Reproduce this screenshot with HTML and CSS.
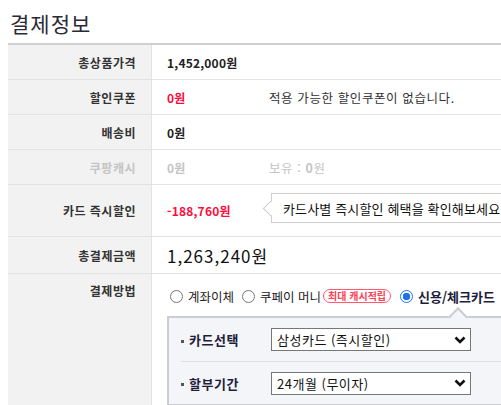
FILE: index.html
```html
<!DOCTYPE html>
<html lang="ko">
<head>
<meta charset="utf-8">
<link rel="stylesheet" href="styles.css">
</head>
<body>
<h2 class="title">결제정보</h2>
<div class="table">
  <div class="row">
    <div class="label">총상품가격</div>
    <div class="value"><span class="amt">1,452,000원</span></div>
  </div>
  <div class="row">
    <div class="label">할인쿠폰</div>
    <div class="value"><span class="amt red">0원</span><span class="note">적용 가능한 할인쿠폰이 없습니다.</span></div>
  </div>
  <div class="row">
    <div class="label">배송비</div>
    <div class="value"><span class="amt">0원</span></div>
  </div>
  <div class="row dim">
    <div class="label">쿠팡캐시</div>
    <div class="value"><span class="amt">0원</span><span class="note">보유 : <b>0</b>원</span></div>
  </div>
  <div class="row tall">
    <div class="label">카드 즉시할인</div>
    <div class="value"><span class="amt red">-188,760원</span><span class="tip">카드사별 즉시할인 혜택을 확인해보세요</span></div>
  </div>
  <div class="row sum">
    <div class="label">총결제금액</div>
    <div class="value"><span class="total">1,263,240원</span></div>
  </div>
  <div class="row method">
    <div class="label">결제방법</div>
    <div class="value col">
      <div class="radios">
        <span class="radio"><span class="circle"></span>계좌이체</span>
        <span class="radio"><span class="circle"></span>쿠페이 머니</span>
        <span class="badge">최대 캐시적립</span>
        <span class="radio on"><span class="circle"></span>신용/체크카드</span>
      </div>
      <div class="panel">
        <div class="prow">
          <span class="plabel">카드선택</span>
          <div class="sel">삼성카드 (즉시할인)<svg width="12" height="8" viewBox="0 0 12 8"><path d="M1.5 1.5 L6 6 L10.5 1.5" fill="none" stroke="#111" stroke-width="2.6"/></svg></div>
        </div>
        <div class="prow">
          <span class="plabel">할부기간</span>
          <div class="sel">24개월 (무이자)<svg width="12" height="8" viewBox="0 0 12 8"><path d="M1.5 1.5 L6 6 L10.5 1.5" fill="none" stroke="#111" stroke-width="2.6"/></svg></div>
        </div>
      </div>
    </div>
  </div>
</div>
</body>
</html>
```
FILE: styles.css
```css
html, body {
  margin: 0;
  padding: 0;
  overflow: hidden;
  background: #fff;
}
body {
  width: 501px;
  height: 405px;
  font-family: "Noto Sans CJK KR", "Noto Sans", sans-serif;
  color: #111;
}
.title {
  margin: 0;
  padding: 8px 0 0 10px;
  height: 43px;
  box-sizing: border-box;
  font-size: 21px;
  font-weight: 400;
  line-height: 30px;
  color: #2a2a35;
  letter-spacing: 1px;
}
.table {
  margin-left: 8px;
  width: 560px;
  border-top: 2px solid #cfcfcf;
}
.row {
  display: grid;
  grid-template-columns: 144px 1fr;
  border-bottom: 1px solid #e3e3e3;
  height: 35px;
  box-sizing: border-box;
}
.row.tall { height: 52px; }
.row.sum { height: 37px; }
.row.method { height: 140px; border-bottom: none; }
.label {
  background: #f2f2f2;
  border-right: 1px solid #e3e3e3;
  text-align: right;
  padding-right: 15px;
  font-size: 12px;
  font-weight: 700;
  color: #333;
  display: flex;
  align-items: center;
  justify-content: flex-end;
  letter-spacing: 0.5px;
}
.method .label {
  align-items: flex-start;
  padding-top: 8px;
}
.value {
  display: flex;
  align-items: center;
  padding-left: 15px;
  font-size: 12px;
}
.value.col {
  flex-direction: column;
  align-items: flex-start;
  padding-top: 12px;
}
.amt {
  width: 102px;
  font-weight: 700;
  color: #222;
  letter-spacing: 0.2px;
}
.amt.red { color: #ff0a3c; }
.note {
  color: #333;
  font-size: 12.5px;
  letter-spacing: 0.6px;
}
.dim .label, .dim .amt, .dim .note { color: #c4c4c4; }
.dim .note b { color: #c4c4c4; }
.tip {
  position: relative;
  margin-left: 2px;
  border: 1px solid #cdcdcd;
  height: 30px;
  box-sizing: border-box;
  display: flex;
  align-items: center;
  padding: 0 12px 0 11px;
  font-size: 13px;
  color: #111;
  white-space: nowrap;
  margin-top: -5px;
  letter-spacing: 0.15px;
}
.tip::before {
  content: "";
  position: absolute;
  left: -7px;
  top: 9px;
  width: 10px;
  height: 10px;
  background: #fff;
  border-left: 1px solid #cdcdcd;
  border-bottom: 1px solid #cdcdcd;
  transform: rotate(45deg);
}
.total {
  font-size: 17px;
  color: #111;
  letter-spacing: 1px;
}
.radios {
  display: flex;
  align-items: center;
  height: 20px;
  white-space: nowrap;
  font-size: 12.5px;
  color: #222;
}
.radio {
  display: inline-flex;
  align-items: center;
  margin-right: 5px;
}
.circle {
  width: 11px;
  height: 11px;
  border: 1px solid #777;
  border-radius: 50%;
  margin: 0 5px 0 3px;
  box-sizing: content-box;
}
.radio.on .circle {
  border: 1px solid #1a73e8;
  background: radial-gradient(circle, #1a73e8 0 3.5px, #fff 4px);
}
.radio.on {
  font-weight: 700;
  font-size: 13px;
  color: #1e1e3a;
  margin-left: 2px;
}
.badge {
  border: 1px solid #ff5a6e;
  color: #ff3c55;
  border-radius: 8px;
  font-size: 10px;
  font-weight: 700;
  padding: 0 4px;
  line-height: 12px;
  margin-left: -3px;
  margin-right: 4px;
}
.panel {
  position: relative;
  margin-top: 10px;
  width: 360px;
  background: #f4f5f9;
  border: 2px solid #cccdd4;
  padding: 0 0 0 12px;
  box-sizing: border-box;
}
.panel::before {
  content: "";
  position: absolute;
  top: -8px;
  left: 282px;
  width: 12px;
  height: 12px;
  background: #f4f5f9;
  border-left: 2px solid #cccdd4;
  border-top: 2px solid #cccdd4;
  transform: rotate(45deg);
}
.prow {
  display: flex;
  align-items: center;
  height: 43px;
  border-bottom: 1px solid #dedfe4;
}
.prow + .prow { border-bottom: none; height: 42px; }
.plabel {
  width: 90px;
  font-size: 13px;
  font-weight: 700;
  color: #1e1e3a;
  letter-spacing: 0.5px;
}
.plabel::before {
  content: "";
  display: inline-block;
  width: 3px;
  height: 3px;
  background: #555;
  margin-right: 5px;
  vertical-align: middle;
}
.sel {
  width: 200px;
  height: 23px;
  box-sizing: border-box;
  border: 1px solid #777;
  background: #fff;
  display: flex;
  align-items: center;
  justify-content: space-between;
  padding: 0 4px 0 5px;
  font-size: 13px;
  color: #111;
  letter-spacing: 0.5px;
}
```
